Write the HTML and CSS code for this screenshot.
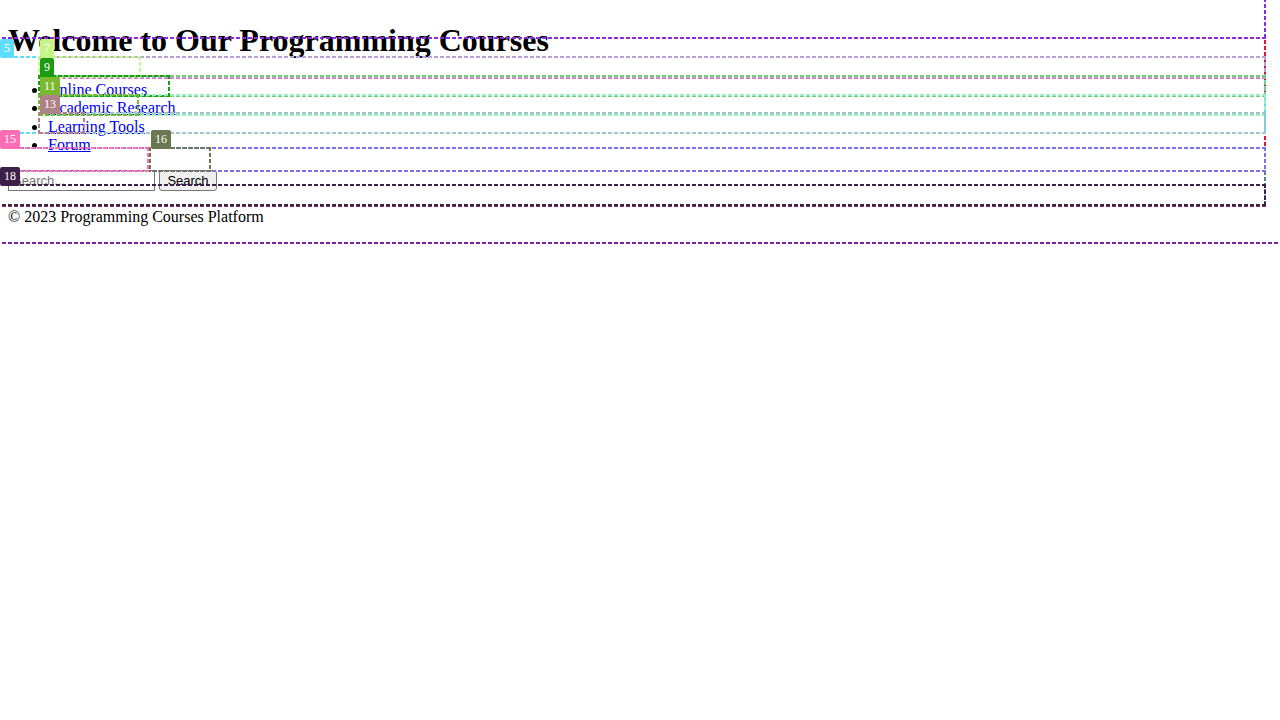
FILE: index.html
```html
<!DOCTYPE html>
<html lang="en">
<head>
<meta charset="utf-8">
<title>Programming Courses</title>
<link rel="stylesheet" href="styles.css">
</head>
<body>
<header><h1>Welcome to Our Programming Courses</h1></header>
<nav>
  <ul>
    <li><a href="#courses">Online Courses</a></li>
    <li><a href="#research">Academic Research</a></li>
    <li><a href="#tools">Learning Tools</a></li>
    <li><a href="#forum">Forum</a></li>
  </ul>
</nav>
<form class="search">
  <input type="text" placeholder="Search..." aria-label="Search">
  <button type="button">Search</button>
</form>
<footer><p>© 2023 Programming Courses Platform</p></footer>

<div class="overlay">
  <div class="box body-box"></div>
  <div class="box main-box"></div>
  <div class="box lower-box"></div>
  <div class="box header-box"></div>
  <div class="box nav-box"><span class="tag">5</span></div>
  <div class="box list-box"></div>
  <div class="box item-one"></div>
  <div class="box link-one"><span class="tag">7</span></div>
  <div class="box item-two"></div>
  <div class="box link-two"><span class="tag">9</span></div>
  <div class="box item-three"></div>
  <div class="box link-three"><span class="tag">11</span></div>
  <div class="box item-four"></div>
  <div class="box link-four"><span class="tag">13</span></div>
  <div class="box form-box"></div>
  <div class="box input-box"><span class="tag">15</span></div>
  <div class="box button-box"><span class="tag">16</span></div>
  <div class="box footer-box"></div>
  <div class="box note-box"><span class="tag">18</span></div>
</div>
</body>
</html>
```
FILE: styles.css
```css
body {
  margin: 0;
  padding: 0 8px;
  font: 16px "Liberation Serif", "Times New Roman", serif;
  color: #000;
  background: #fff;
}
header { padding-top: 21px; }
h1 { margin: 0 0 22px; font-size: 32px; line-height: 38px; }
ul { margin: 0 0 16px; padding-left: 40px; }
li { line-height: 18px; }
li:nth-child(3) { padding-top: 1px; }
a { color: #00e; }
.search { display: flex; gap: 4px; }
.search input, .search button {
  box-sizing: border-box;
  height: 21px;
  font: 13px "Liberation Sans", Arial, sans-serif;
}
.search input { width: 147px; padding: 1px 4px; border: 1px solid #767676; }
.search input::placeholder { color: #757575; }
.search button {
  width: 58px;
  padding: 0;
  border: 1px solid #767676;
  border-radius: 3px;
  background: #efefef;
  color: #000;
}
footer p { margin: 16px 0; line-height: 20px; }

/* Outlines and number tags drawn over the page */
.overlay {
  position: absolute;
  inset: 0;
  overflow: hidden;
  pointer-events: none;
}
.box {
  --across: repeating-linear-gradient(to left, var(--c) 0 4px, transparent 4px 6px);
  --down: repeating-linear-gradient(to bottom, var(--c) 0 4px, transparent 4px 6px);
  position: absolute;
  left: -2px;
  right: 14px;
  background:
    var(--across) top / 100% 2px no-repeat,
    var(--across) bottom / 100% 2px no-repeat,
    var(--down) left / 2px 100% no-repeat,
    var(--down) right / 2px 100% no-repeat;
}
.tag {
  position: absolute;
  left: 2px;
  bottom: calc(100% - 2px);
  padding: 2px 4px;
  border-radius: 2px;
  background: var(--c);
  color: #fff;
  font-size: 12px;
  line-height: 15px;
  z-index: 1;
}
.body-box { --c: #7a1fa2; top: -10px; height: 254px; right: -10px; }
.main-box { --c: #dc143c; top: -2px; height: 151px; }
.lower-box { --c: #5a7a95; top: 147px; height: 59px; }
.header-box { --c: #8a2be2; top: -2px; height: 41px; }
.nav-box { --c: #5ddcff; top: 56px; height: 78px; }
.list-box { --c: #e66fc4; top: 56px; height: 23px; left: 38px; }
.item-one { --c: #b8a0dc; top: 56px; height: 22px; left: 38px; }
.link-one { --c: #c4f587; top: 56px; height: 22px; left: 38px; width: 103px; }
.item-two { --c: #70d07a; top: 75px; height: 22px; left: 38px; }
.link-two { --c: #1e9b14; top: 75px; height: 22px; left: 38px; width: 132px; }
.item-three { --c: #98f0c0; top: 94px; height: 22px; left: 38px; }
.link-three { --c: #78b92d; top: 94px; height: 22px; left: 38px; width: 101px; }
.item-four { --c: #9fc4c8; top: 112px; height: 22px; left: 38px; }
.link-four { --c: #ad8188; top: 112px; height: 22px; left: 38px; width: 47px; }
.form-box { --c: #7b73e8; top: 147px; height: 25px; }
.input-box { --c: #ff6eb4; top: 147px; height: 25px; width: 151px; }
.button-box { --c: #6b7750; top: 147px; height: 25px; left: 149px; width: 62px; }
.footer-box { --c: #803060; top: 184px; height: 23px; }
.note-box { --c: #3d2048; top: 184px; height: 22px; }
```
